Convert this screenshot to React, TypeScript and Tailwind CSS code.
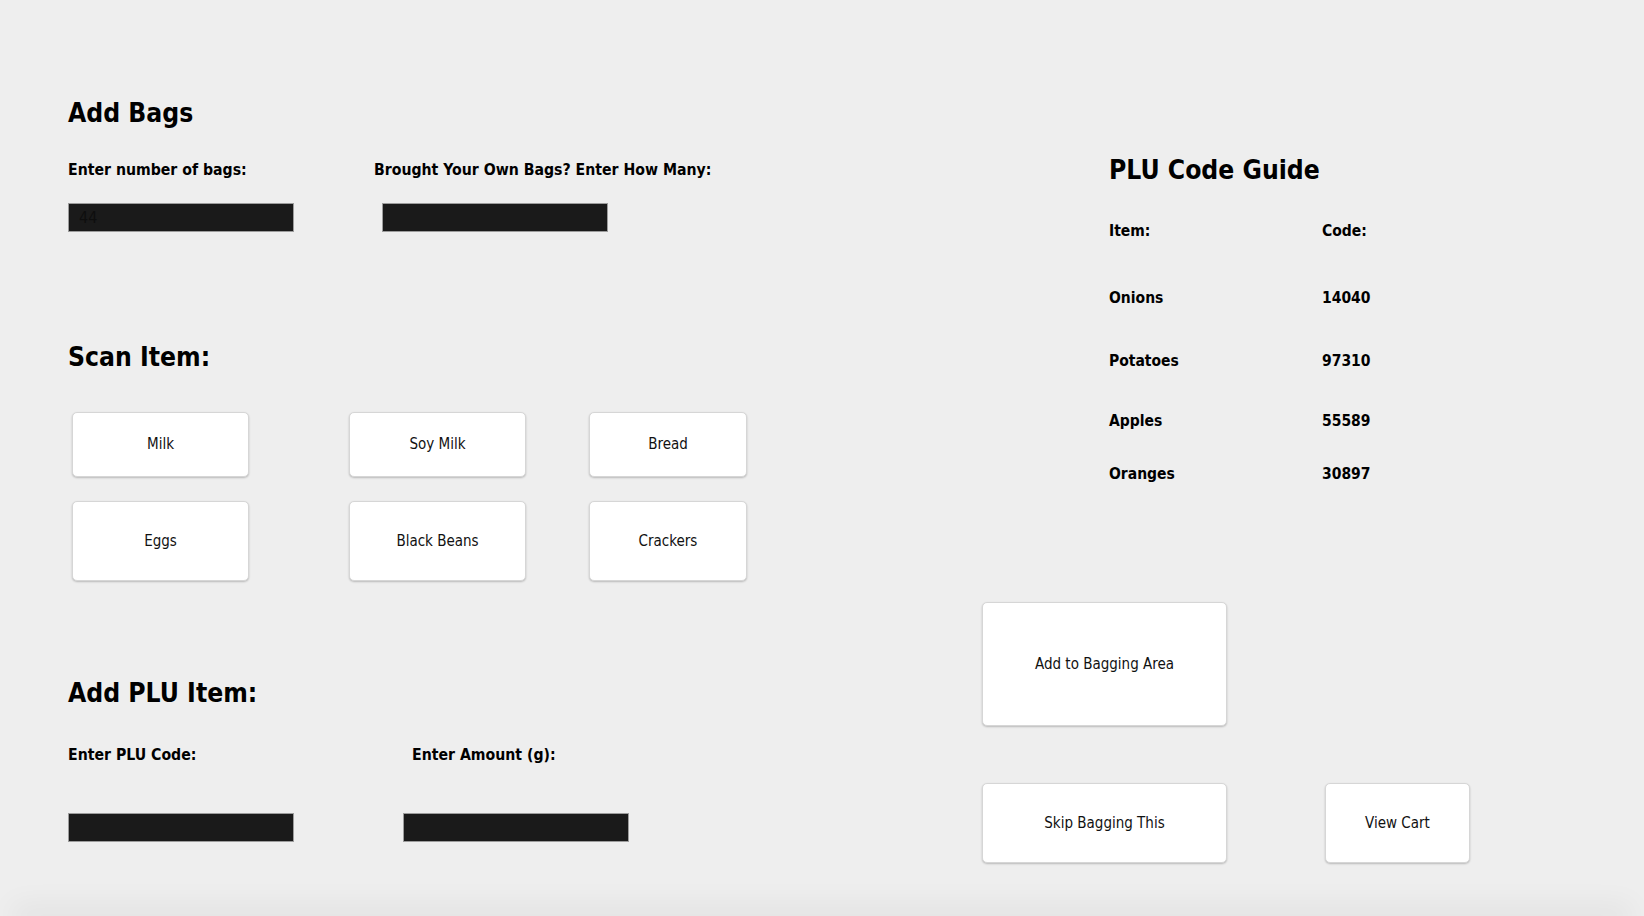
import React from "react";

const Btn = ({ label, className }: { label: string; className: string }) => (
  <button
    className={`bg-white border border-[#d6d6d6] rounded-[5px] shadow-[0_1px_2px_rgba(0,0,0,0.22)] text-[15px] text-[#111] flex items-center justify-center ${className}`}
  >
    {label}
  </button>
);

const Field = ({ value, className }: { value?: string; className: string }) => (
  <div
    className={`w-[226px] h-[29px] bg-[#1a1a1a] border border-[#9c9c9c] text-[16px] text-[#0e0e0e] pl-[10px] flex items-center ${className}`}
  >
    {value}
  </div>
);

const rows = [
  { item: "Onions", code: "14040", mt: "mt-[47px]" },
  { item: "Potatoes", code: "97310", mt: "mt-[43px]" },
  { item: "Apples", code: "55589", mt: "mt-[40px]" },
  { item: "Oranges", code: "30897", mt: "mt-[33px]" },
];

export default function App() {
  return (
    <div className="h-[916px] overflow-hidden bg-[#eeeeee] text-black flex flex-col [font-family:'DejaVu_Sans_Condensed','DejaVu_Sans',sans-serif]">
      <div className="flex flex-1">
        {/* Left column */}
        <div className="w-[982px] pl-[68px] pt-[97px] flex flex-col">
          <h2 className="text-[26.25px] font-bold leading-[32px]">Add Bags</h2>
          <div className="flex mt-[31px] text-[15.7px] font-bold leading-[20px]">
            <span className="w-[306px]">Enter number of bags:</span>
            <span>Brought Your Own Bags? Enter How Many:</span>
          </div>
          <div className="flex mt-[23px]">
            <Field value="44" className="" />
            <Field className="ml-[88px]" />
          </div>

          <h2 className="text-[26.25px] font-bold leading-[32px] mt-[109px]">Scan Item:</h2>
          <div className="flex flex-col gap-[24px] mt-[39px] ml-[4px]">
            <div className="flex">
              <Btn label="Milk" className="w-[177px] h-[65px]" />
              <Btn label="Soy Milk" className="w-[177px] h-[65px] ml-[100px]" />
              <Btn label="Bread" className="w-[158px] h-[65px] ml-[63px]" />
            </div>
            <div className="flex">
              <Btn label="Eggs" className="w-[177px] h-[80px]" />
              <Btn label="Black Beans" className="w-[177px] h-[80px] ml-[100px]" />
              <Btn label="Crackers" className="w-[158px] h-[80px] ml-[63px]" />
            </div>
          </div>

          <h2 className="text-[26.25px] font-bold leading-[32px] mt-[96px]">Add PLU Item:</h2>
          <div className="flex mt-[36px] text-[15.7px] font-bold leading-[20px]">
            <span className="w-[344px]">Enter PLU Code:</span>
            <span>Enter Amount (g):</span>
          </div>
          <div className="flex mt-[48px]">
            <Field className="" />
            <Field className="ml-[109px]" />
          </div>
        </div>

        {/* Right column */}
        <div className="flex flex-col pt-[154px]">
          <div className="pl-[127px]">
            <h2 className="text-[26.25px] font-bold leading-[32px]">PLU Code Guide</h2>
            <div className="flex mt-[35px] text-[15.5px] font-bold leading-[20px]">
              <span className="w-[213px]">Item:</span>
              <span>Code:</span>
            </div>
            {rows.map((r) => (
              <div key={r.item} className={`flex text-[15.5px] font-bold leading-[20px] ${r.mt}`}>
                <span className="w-[213px]">{r.item}</span>
                <span>{r.code}</span>
              </div>
            ))}
          </div>
          <Btn label="Add to Bagging Area" className="w-[245px] h-[124px] mt-[118px]" />
          <div className="flex mt-[57px]">
            <Btn label="Skip Bagging This" className="w-[245px] h-[80px]" />
            <Btn label="View Cart" className="w-[145px] h-[80px] ml-[98px]" />
          </div>
        </div>
      </div>
      <div className="h-0 mx-[24px] shadow-[0_0_28px_12px_rgba(0,0,0,0.05)]" />
    </div>
  );
}
